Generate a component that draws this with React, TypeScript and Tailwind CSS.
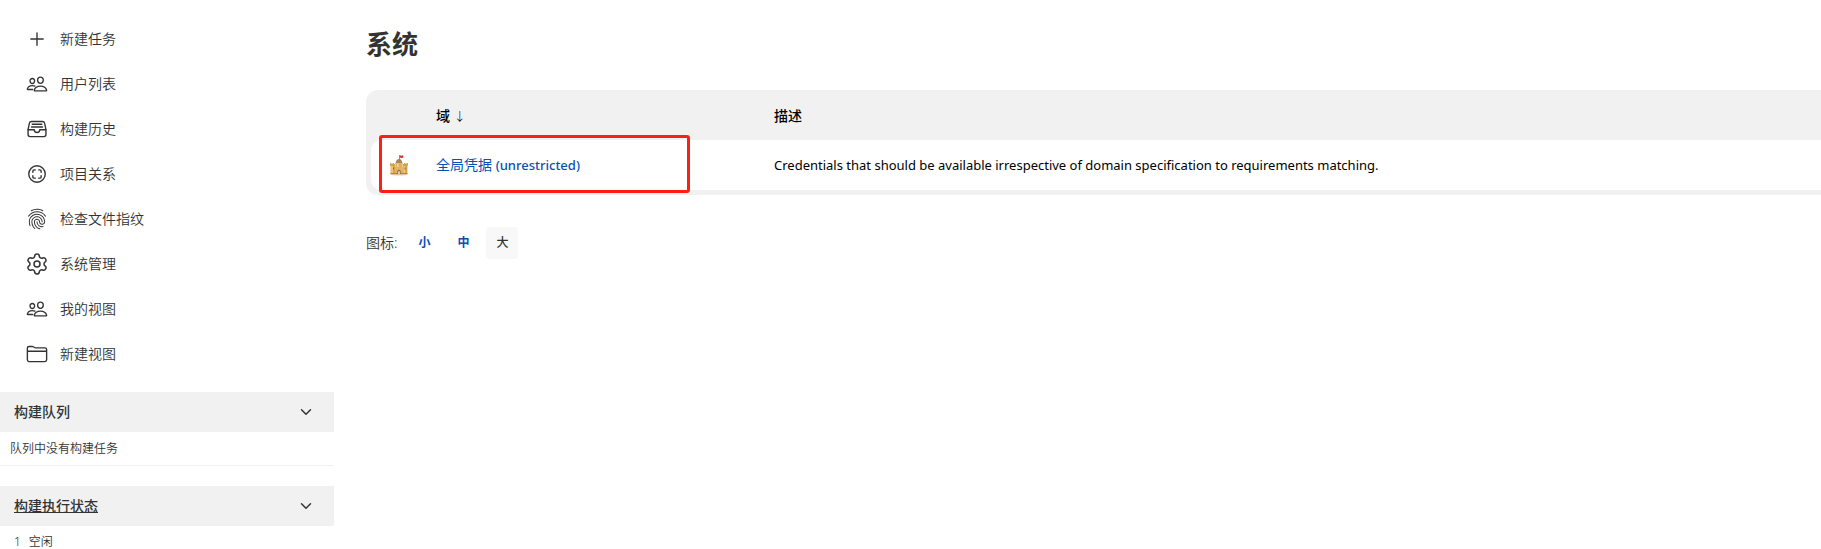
import { ReactNode } from 'react';
import { Settings } from 'lucide-react';
import {
  IoAddOutline,
  IoChevronDownOutline,
  IoFileTrayFullOutline,
  IoFingerPrintOutline,
  IoFolderOutline,
  IoPeopleOutline,
  IoScanCircleOutline,
} from 'react-icons/io5';

/**
 * Gear icon, cropped so that it fills the same box as the other icons.
 */
function GearIcon({ className }: { className?: string }) {
  return <Settings viewBox="1 1 22 22" strokeWidth={1.5} className={className} />;
}

/** Side navigation entries, in display order. */
const tasks = [
  { label: '新建任务', Icon: IoAddOutline },
  { label: '用户列表', Icon: IoPeopleOutline },
  { label: '构建历史', Icon: IoFileTrayFullOutline },
  { label: '项目关系', Icon: IoScanCircleOutline },
  { label: '检查文件指纹', Icon: IoFingerPrintOutline },
  { label: '系统管理', Icon: GearIcon },
  { label: '我的视图', Icon: IoPeopleOutline },
  { label: '新建视图', Icon: IoFolderOutline },
];

/**
 * Sand castle icon of a credentials domain.
 */
function CastleIcon() {
  return (
    <svg width="20" height="22" viewBox="0 0 20 22" aria-hidden="true">
      <ellipse cx="10" cy="20.6" rx="9" ry="0.8" fill="#d8d4cc" />
      <path d="M10.5 1v5" stroke="#8a7a66" strokeWidth="0.8" />
      <path d="M10.7 1.2l1.8.6 1.8-.5v2.4l-1.8.3-1.8-.4z" fill="#d3323c" />
      <path d="M6.5 9.5C6.6 7 8.4 5.2 10 4.8c1.8.4 3.4 2.2 3.5 4.7z" fill="#a8865c" />
      <path d="M6.5 9h7v5h-7z" fill="#dfb067" />
      <path d="M8 9.5h1.5V13H8z" fill="#f4d9a2" />
      <path d="M1 9h1.5v1h1V9H5v1h1.2v10H1.6v-8L1 11.2zM19 9h-1.5v1h-1V9H15v1h-1.2v10h4.6v-8l.6-.8z" fill="#d9a04a" />
      <path d="M5.8 13h1.4v1h1.3v-1h3v1h1.3v-1h1.4v7H5.8z" fill="#e3b263" />
      <path d="M2.3 12h1.5v7H2.3zM14.6 12h1.5v7h-1.5z" fill="#f1cf8c" />
      <path d="M1.6 19h16.8v1.2H1.6z" fill="#bd8432" />
      <path d="M8.3 20v-2.6a1.7 1.7 0 013.4 0V20z" fill="#8c6b45" />
      <path d="M9.3 20v-2.3a.7.7 0 011.4 0V20z" fill="#fff3d6" />
      <path d="M4 13.5h.8v2H4zM15.6 13.5h.8v2h-.8z" fill="#7b5b36" />
    </svg>
  );
}

/**
 * Collapsible pane header of the side panel.
 */
function PaneHeader({ id, children }: { id: string; children: ReactNode }) {
  return (
    <div className="flex h-10 items-center justify-between bg-[#f1f1f1] pr-5 pl-3.5">
      <h2 id={id} className="text-sm font-medium">{children}</h2>
      <button type="button" aria-labelledby={id} className="cursor-pointer">
        <IoChevronDownOutline className="size-4" />
      </button>
    </div>
  );
}

function SidePanel() {
  return (
    <aside className="w-[334px] shrink-0">
      <nav className="pt-4">
        {tasks.map(({ label, Icon }) => (
          <a key={label} href="#" className="flex h-[45px] items-center gap-3 pl-[26px] text-sm font-[350]">
            <Icon className="size-[22px]" />
            {label}
          </a>
        ))}
      </nav>

      <section className="mt-4">
        <PaneHeader id="queue">构建队列</PaneHeader>
        <p className="border-b border-[#f1f1f1] px-2.5 pt-[9px] pb-2 text-xs leading-4 font-[350]">
          队列中没有构建任务
        </p>
      </section>

      <section className="mt-5">
        <PaneHeader id="executors">
          <a href="#" className="underline">构建执行状态</a>
        </PaneHeader>
        <div className="flex gap-2 px-3.5 pt-2 text-xs leading-4 font-[350]">
          <span>1</span>
          <span>空闲</span>
        </div>
      </section>
    </aside>
  );
}

function DomainTable() {
  return (
    <div className="relative rounded-l-xl border-b-[5px] border-l-[5px] border-[#f1f1f1] bg-[#f1f1f1]">
      <table className="w-full table-fixed border-separate border-spacing-0 text-left text-sm text-black">
        <thead>
          <tr className="h-[50px]">
            <th className="w-[65px] p-0" aria-label="图标" />
            <th className="w-[338px] p-0 pt-0.5 font-medium">
              域 <span className="text-xs font-light">↓</span>
            </th>
            <th className="p-0 pt-0.5 font-medium">描述</th>
          </tr>
        </thead>
        <tbody>
          <tr className="h-[50px]">
            <td className="rounded-l-[10px] bg-white p-0 pl-[18px]">
              <CastleIcon />
            </td>
            <td className="bg-white p-0">
              <a href="#" className="text-[#0b4fb3]">
                全局凭据 <span className="text-[13px] font-medium">(unrestricted)</span>
              </a>
            </td>
            <td className="bg-white p-0 text-[13px]">
              Credentials that should be available irrespective of domain specification to requirements matching.
            </td>
          </tr>
        </tbody>
      </table>
      {/* Highlight around the global domain row */}
      <div className="pointer-events-none absolute top-[45px] left-2 h-[58px] w-[311px] rounded-[3px] border-3 border-[#ff1e12]" />
    </div>
  );
}

export default function App() {
  return (
    <div className="flex h-screen overflow-hidden bg-white font-['Noto_Sans','Noto_Sans_CJK_SC',sans-serif] text-[#333]">
      <SidePanel />
      <main className="min-w-0 flex-1 pt-6 pl-8">
        <h1 className="mb-[26px] text-[26px] leading-10 font-bold">系统</h1>
        <DomainTable />
        <div className="mt-8 flex items-center text-sm">
          <span className="mr-[11px] font-[350]">图标:</span>
          <div className="flex gap-[7px] text-xs">
            <a href="#" className="flex size-8 items-center justify-center font-bold text-[#0b4fb3]">小</a>
            <a href="#" className="flex size-8 items-center justify-center font-bold text-[#0b4fb3]">中</a>
            <span className="flex size-8 items-center justify-center rounded bg-[#f8f8f8] font-medium">大</span>
          </div>
        </div>
      </main>
    </div>
  );
}
